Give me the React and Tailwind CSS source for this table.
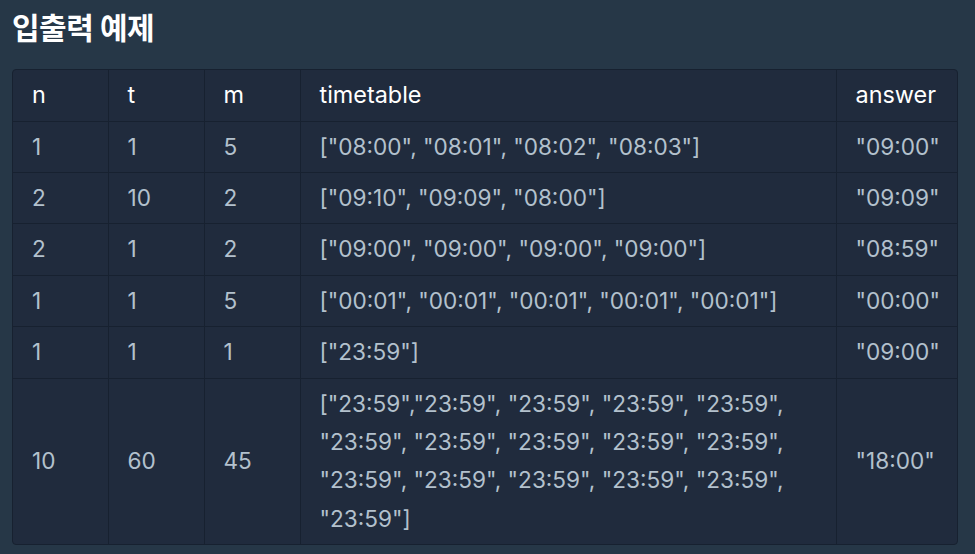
import React from "react";

const rows = [
  ["1", "1", "5", '["08:00", "08:01", "08:02", "08:03"]', '"09:00"'],
  ["2", "10", "2", '["09:10", "09:09", "08:00"]', '"09:09"'],
  ["2", "1", "2", '["09:00", "09:00", "09:00", "09:00"]', '"08:59"'],
  ["1", "1", "5", '["00:01", "00:01", "00:01", "00:01", "00:01"]', '"00:00"'],
  ["1", "1", "1", '["23:59"]', '"09:00"'],
  [
    "10",
    "60",
    "45",
    '["23:59","23:59", "23:59", "23:59", "23:59", "23:59", "23:59", "23:59", "23:59", "23:59", "23:59", "23:59", "23:59", "23:59", "23:59", "23:59"]',
    '"18:00"',
  ],
];

export default function App() {
  return (
    <div
      className="w-[975px] h-[554px] bg-[#263747] px-3 pt-[7px] overflow-hidden"
      style={{ fontFamily: "Inter, 'Noto Sans CJK KR', sans-serif" }}
    >
      <h2 className="text-[30px] font-bold text-white leading-[42px] tracking-[-0.5px]">
        입출력 예제
      </h2>
      <div className="mt-[20px] w-[946px] rounded-[4px] overflow-hidden border border-[#172130] bg-[#202b3d]">
        <table className="w-full table-fixed border-collapse text-[22.6px] leading-[38.4px]">
          <colgroup>
            <col className="w-[95px]" />
            <col className="w-[96px]" />
            <col className="w-[96px]" />
            <col className="w-[536px]" />
            <col className="w-[121px]" />
          </colgroup>
          <thead>
            <tr className="text-white">
              {["n", "t", "m", "timetable", "answer"].map((h, i) => (
                <th
                  key={h}
                  className={`h-[51px] px-[19px] text-left text-[23.4px] font-normal border-b border-[#172130] ${
                    i < 4 ? "border-r" : ""
                  }`}
                >
                  {h}
                </th>
              ))}
            </tr>
          </thead>
          <tbody className="text-[#b3c1cd]">
            {rows.map((r, ri) => (
              <tr key={ri}>
                {r.map((c, ci) => (
                  <td
                    key={ci}
                    className={`px-[19px] py-[6px] align-middle border-[#172130] ${
                      ci < 4 ? "border-r" : ""
                    } ${ri < rows.length - 1 ? "border-b" : ""}`}
                  >
                    {c}
                  </td>
                ))}
              </tr>
            ))}
          </tbody>
        </table>
      </div>
    </div>
  );
}
